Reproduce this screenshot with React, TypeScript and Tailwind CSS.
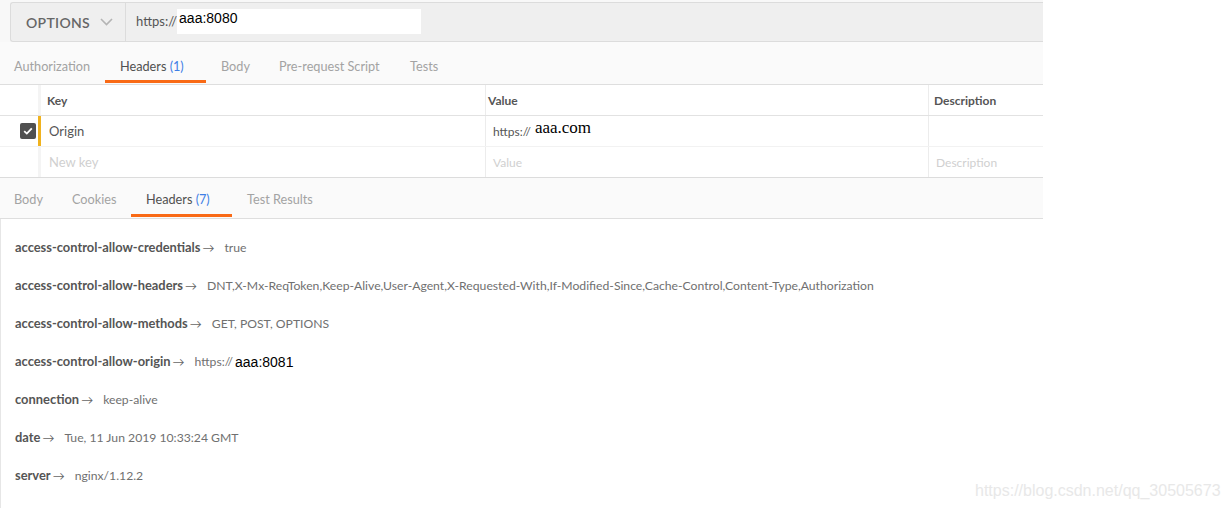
import React from "react";

const headers: [string, React.ReactNode][] = [
  ["access-control-allow-credentials", "true"],
  [
    "access-control-allow-headers",
    "DNT,X-Mx-ReqToken,Keep-Alive,User-Agent,X-Requested-With,If-Modified-Since,Cache-Control,Content-Type,Authorization",
  ],
  ["access-control-allow-methods", "GET, POST, OPTIONS"],
  [
    "access-control-allow-origin",
    <span key="o" className="inline-flex items-center">
      https://
      <span className="[font-family:'Liberation_Sans',Arial,sans-serif] text-[14px] text-black ml-[2px]">aaa:8081</span>
    </span>,
  ],
  ["connection", "keep-alive"],
  ["date", "Tue, 11 Jun 2019 10:33:24 GMT"],
  ["server", "nginx/1.12.2"],
];

function Tab({
  w,
  label,
  count,
  active,
  pt,
}: {
  w: string;
  label: string;
  count?: string;
  active?: boolean;
  pt: string;
}) {
  return (
    <div className={`${w} ${pt} relative h-full flex items-center pl-[15px] shrink-0`}>
      <span className={active ? "text-[#505050]" : "text-[#a3a3a3]"}>
        {label}
        {count && <span className="text-[#3f7fe6]"> {count}</span>}
      </span>
      {active && <div className="absolute left-0 right-0 bottom-[1px] h-[3px] bg-[#f96a16]" />}
    </div>
  );
}

export default function App() {
  return (
    <div className="w-[1228px] h-[508px] bg-white relative overflow-hidden [font-family:'Lato','Open_Sans',sans-serif]">
      <div className="w-[1043px]">
        {/* URL bar */}
        <div className="h-[42px] pt-[2px] pl-[10px] bg-[#f8f8f8]">
          <div className="h-[40px] flex border border-r-0 border-[#dcdcdc] rounded-l-[3px] bg-[#efefef]">
            <div className="w-[115px] shrink-0 border-r border-[#dcdcdc] flex items-center pl-[15px] gap-[10px]">
              <span className="text-[14px] font-semibold tracking-[0.3px] text-[#666]">OPTIONS</span>
              <svg width="13" height="8" viewBox="0 0 13 8" fill="none">
                <path d="M1 1l5.5 5.5L12 1" stroke="#b4b4b4" strokeWidth="1.6" />
              </svg>
            </div>
            <div className="flex items-center pl-[10px]">
              <span className="text-[13px] text-[#555]">https://</span>
              <div className="w-[244px] h-[25px] bg-white flex items-start pl-[2px] mt-[-2px]">
                <span className="[font-family:'Liberation_Sans',Arial,sans-serif] text-[14px] leading-[16px] mt-[1px] text-black">
                  aaa:8080
                </span>
              </div>
            </div>
          </div>
        </div>

        {/* Request tabs */}
        <div className="h-[43px] bg-[#fafafa] border-b border-[#dedede] flex text-[12.7px]">
          <div className="w-[105px] h-full flex items-center pl-[14px] pt-[7px] text-[#a3a3a3] shrink-0">Authorization</div>
          <Tab pt="pt-[7px]" w="w-[101px]" label="Headers" count="(1)" active />
          <Tab pt="pt-[7px]" w="w-[58px]" label="Body" />
          <Tab pt="pt-[7px]" w="w-[131px]" label="Pre-request Script" />
          <Tab pt="pt-[7px]" w="w-[80px]" label="Tests" />
        </div>

        {/* Headers table */}
        <div className="border-b border-[#dcdcdc] text-[12px]">
          <div className="flex h-[31px] border-b border-[#e2e2e2]">
            <div className="w-[38px] shrink-0" />
            <div className="w-[3px] bg-[#f4f4f4] shrink-0" />
            <div className="w-[445px] flex items-center pl-[6px] pt-[1px] font-bold text-[#555] border-r border-[#ececec]">Key</div>
            <div className="w-[443px] flex items-center pl-[2px] pt-[1px] font-bold text-[#555] border-r border-[#ececec]">Value</div>
            <div className="flex-1 flex items-center pl-[5px] pt-[1px] font-bold text-[#555]">Description</div>
          </div>
          <div className="flex h-[31px] border-b border-[#f2f2f2]">
            <div className="w-[38px] shrink-0 flex items-center justify-end pr-[2px]">
              <div className="w-[16px] h-[16px] rounded-[2px] bg-[#505050] flex items-center justify-center">
                <svg width="10" height="8" viewBox="0 0 10 8" fill="none">
                  <path d="M1.2 4.2l2.6 2.4L8.8 1.3" stroke="white" strokeWidth="1.8" />
                </svg>
              </div>
            </div>
            <div className="w-[3px] bg-[#f0b21e] shrink-0" />
            <div className="w-[445px] flex items-center pl-[8px] pt-[1px] text-[13px] text-[#555] border-r border-[#ececec]">Origin</div>
            <div className="w-[443px] flex items-center pl-[7px] pt-[2px] text-[12px] text-[#555] border-r border-[#ececec]">
              https://
              <span className="[font-family:'Liberation_Serif','Times_New_Roman',serif] text-[17px] text-black leading-none mt-[-9px] ml-[4px]">
                aaa.com
              </span>
            </div>
            <div className="flex-1" />
          </div>
          <div className="flex h-[30px]">
            <div className="w-[38px] shrink-0" />
            <div className="w-[3px] bg-[#f4f4f4] shrink-0" />
            <div className="w-[445px] flex items-center pl-[8px] pt-[1px] text-[13px] text-[#d0d0d0] border-r border-[#ececec]">New key</div>
            <div className="w-[443px] flex items-center pl-[7px] pt-[1px] text-[12px] text-[#d0d0d0] border-r border-[#ececec]">Value</div>
            <div className="flex-1 flex items-center pl-[7px] pt-[1px] text-[12px] text-[#d0d0d0]">Description</div>
          </div>
        </div>

        {/* Response tabs */}
        <div className="h-[41px] bg-[#fafafa] border-b border-[#dedede] flex text-[12.7px]">
          <div className="w-[57px] h-full flex items-center pl-[14px] pt-[4px] text-[#a3a3a3] shrink-0">Body</div>
          <Tab pt="pt-[4px]" w="w-[74px]" label="Cookies" />
          <Tab pt="pt-[4px]" w="w-[101px]" label="Headers" count="(7)" active />
          <Tab pt="pt-[4px]" w="w-[110px]" label="Test Results" />
        </div>

        {/* Response headers */}
        <div className="pt-[10px] pl-[14px] border-l border-[#e6e6e6] h-[290px]">
          {headers.map(([k, v]) => (
            <div key={k} className="h-[38px] flex items-center">
              <span className="font-bold text-[12.9px] text-[#555]">{k}</span>
              <span className="text-[#666] text-[12px] ml-[2px]">→</span>
              <span className="text-[#707070] text-[12.2px] ml-[10px]">{v}</span>
            </div>
          ))}
        </div>
      </div>

      <div className="absolute left-[975px] top-[479px] [font-family:'Liberation_Sans',Arial,sans-serif] text-[16px] text-[#e8e8e8] whitespace-nowrap">
        https://blog.csdn.net/qq_30505673
      </div>
    </div>
  );
}
